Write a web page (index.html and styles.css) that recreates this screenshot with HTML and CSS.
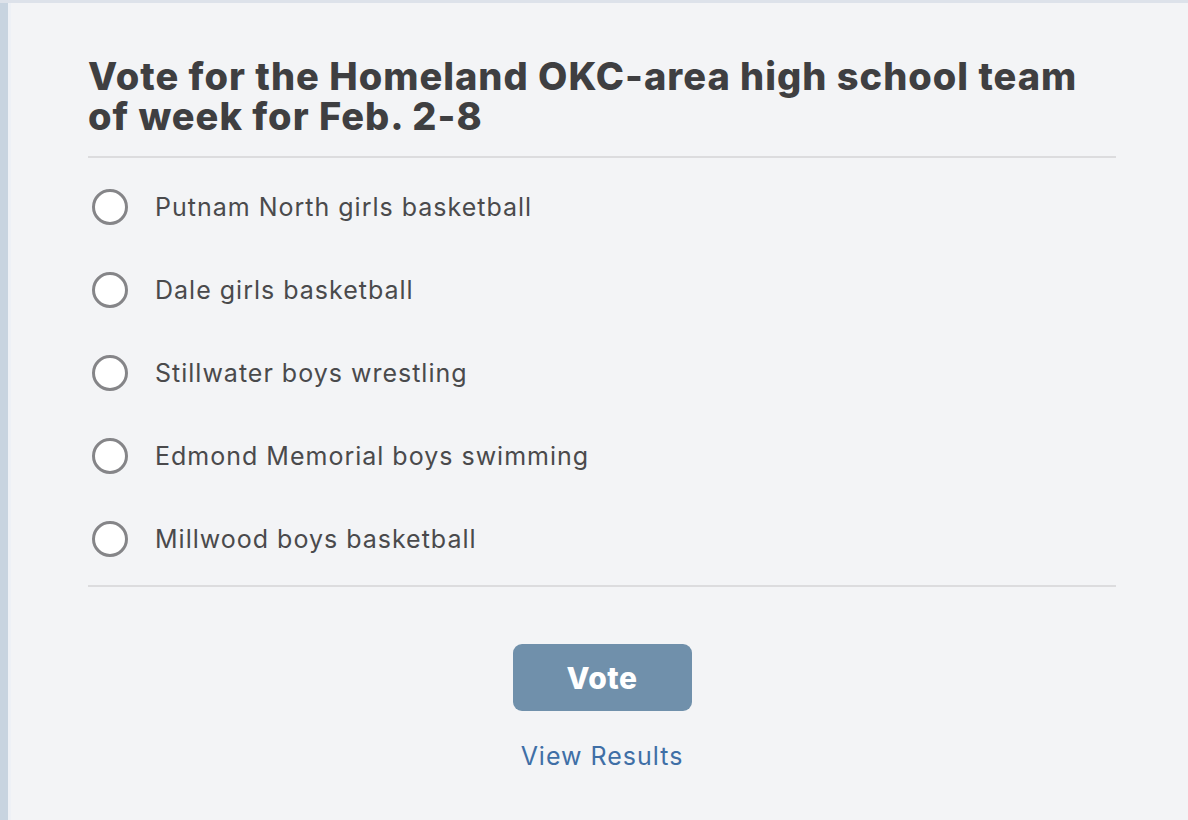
FILE: index.html
```html
<!DOCTYPE html>
<html>
<head>
<meta charset="utf-8">
<link rel="stylesheet" href="styles.css">
</head>
<body>
<div class="frame">
  <div class="strip"></div>
  <main class="poll">
    <h1 class="title">Vote for the Homeland OKC-area high school team of week for Feb. 2-8</h1>
    <ul class="options">
      <li class="option"><span class="radio"></span><span class="label">Putnam North girls basketball</span></li>
      <li class="option"><span class="radio"></span><span class="label">Dale girls basketball</span></li>
      <li class="option"><span class="radio"></span><span class="label">Stillwater boys wrestling</span></li>
      <li class="option"><span class="radio"></span><span class="label">Edmond Memorial boys swimming</span></li>
      <li class="option"><span class="radio"></span><span class="label">Millwood boys basketball</span></li>
    </ul>
    <div class="actions">
      <button class="vote">Vote</button>
      <a class="results" href="#">View Results</a>
    </div>
  </main>
</div>
</body>
</html>
```

FILE: styles.css
```css
html, body {
  margin: 0;
  padding: 0;
  background: #f3f4f6;
  font-family: Inter, "Liberation Sans", Arial, sans-serif;
}
.frame {
  display: flex;
  height: 820px;
  border-top: 3px solid #dde2ea;
  box-sizing: border-box;
}
.strip {
  width: 8px;
  background: #c8d4e0;
  border-right: 3px solid #eef1f6;
}
.poll {
  flex: 1;
  padding: 53px 72px 0 77px;
}
.title {
  margin: 0;
  font-size: 38px;
  line-height: 40px;
  font-weight: 800;
  letter-spacing: 1px;
  color: #3f3f41;
  padding-bottom: 20px;
  border-bottom: 2px solid #dcdcde;
}
.options {
  list-style: none;
  margin: 0;
  padding: 7px 0 5px;
  border-bottom: 2px solid #dcdcde;
}
.option {
  display: flex;
  align-items: center;
  height: 83px;
}
.radio {
  width: 30px;
  height: 30px;
  border: 3px solid #858588;
  border-radius: 50%;
  background: #fff;
  margin-left: 4px;
  margin-right: 27px;
  flex: none;
}
.label {
  font-size: 25px;
  letter-spacing: 1px;
  color: #4a4a4c;
}
.actions {
  display: flex;
  flex-direction: column;
  align-items: center;
  padding-top: 57px;
}
.vote {
  width: 179px;
  height: 67px;
  border: none;
  border-radius: 9px;
  background: #7090ab;
  color: #fff;
  font-family: inherit;
  font-weight: 800;
  font-size: 30px;
  letter-spacing: 0.5px;
}
.results {
  margin-top: 30px;
  font-size: 25px;
  letter-spacing: 1px;
  color: #3f6fa6;
  text-decoration: none;
}
```
